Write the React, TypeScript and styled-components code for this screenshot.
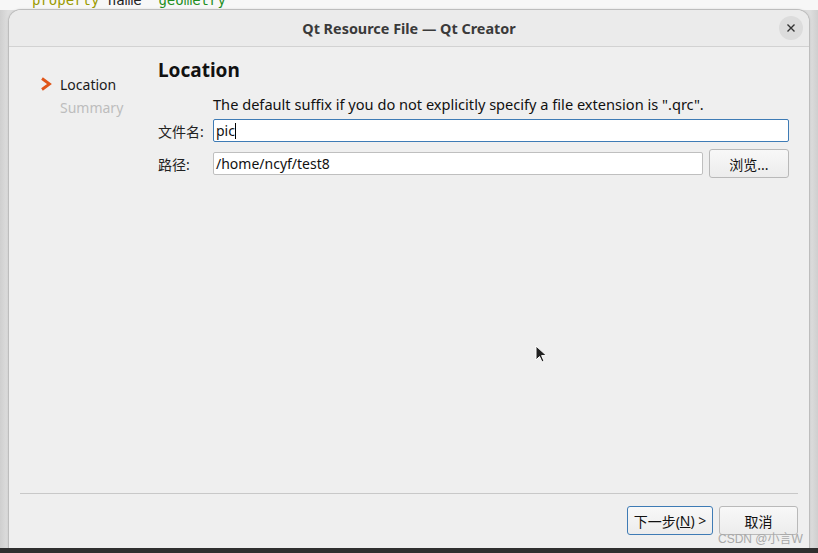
import { createGlobalStyle, styled } from 'styled-components';

const Global = createGlobalStyle`
  html, body {
    margin: 0;
    padding: 0;
    width: 818px;
    height: 553px;
    overflow: hidden;
    background: #d6d6d6;
    font-family: "Noto Sans", "Noto Sans CJK SC", sans-serif;
  }
`;

const S = {
  screen: styled.div`
    position: relative;
    width: 818px;
    height: 553px;
    display: grid;
    grid-template-rows: 10px 538px 5px;
    grid-template-columns: 9px 800px 9px;
    background: linear-gradient(90deg, #cfcfcf 0, #dedede 8px, #dedede 810px, #cfcfcf 818px);
  `,
  codeStrip: styled.div`
    grid-column: 1 / 4;
    grid-row: 1;
    background: #f7f7f7;
    overflow: hidden;
    font-family: "DejaVu Sans Mono", monospace;
    font-size: 14px;
    line-height: 14px;
    margin-top: -7px;
    padding-left: 32px;
    white-space: pre;
    color: #9a9a00;
    span { color: #222; }
    em { font-style: normal; color: #1f8f1f; }
  `,
  bottomStrip: styled.div`
    grid-column: 1 / 4;
    grid-row: 3;
    background: #2f2f2f;
  `,
  window: styled.div`
    grid-column: 2;
    grid-row: 2;
    display: flex;
    flex-direction: column;
    background: #efefef;
    border-radius: 12px 12px 0 0;
    box-shadow: 0 0 0 1px #bdbdbd, 0 0 3px rgba(0,0,0,0.25);
    overflow: hidden;
  `,
  titleBar: styled.div`
    position: relative;
    height: 36px;
    flex: none;
    display: flex;
    align-items: center;
    justify-content: center;
    background: #ebebeb;
    border-bottom: 1px solid #d2d2d2;
    font-size: 14.4px;
    font-weight: bold;
    color: #3a3a3a;
  `,
  close: styled.div`
    position: absolute;
    right: 6px;
    top: 6px;
    width: 24px;
    height: 24px;
    border-radius: 50%;
    background: #dcdcdc;
    display: flex;
    align-items: center;
    justify-content: center;
  `,
  body: styled.div`
    flex: 1;
    display: flex;
    padding: 10px 20px 0 31px;
  `,
  sidebar: styled.div`
    width: 118px;
    flex: none;
    padding-top: 17px;
    display: flex;
    flex-direction: column;
    gap: 3px;
  `,
  step: styled.div<{ $active?: boolean }>`
    display: flex;
    align-items: center;
    gap: 8px;
    height: 20px;
    font-size: 14px;
    color: ${({ $active }) => ($active ? '#1a1a1a' : '#bdbdbd')};
    padding-left: ${({ $active }) => ($active ? '0' : '20px')};
  `,
  main: styled.div`
    flex: 1;
    display: flex;
    flex-direction: column;
  `,
  heading: styled.h1`
    margin: 0;
    font-size: 19px;
    font-weight: bold;
    color: #111;
    line-height: 26px;
  `,
  hint: styled.div`
    margin: 13px 0 0 55px;
    font-size: 14.6px;
    color: #111;
    line-height: 16px;
  `,
  row: styled.div<{ $top: number }>`
    display: flex;
    align-items: center;
    gap: 6px;
    margin-top: ${({ $top }) => $top}px;
  `,
  label: styled.div`
    width: 49px;
    flex: none;
    font-size: 14px;
    color: #222;
  `,
  input: styled.div<{ $focus?: boolean }>`
    flex: 1;
    height: 23px;
    box-sizing: border-box;
    background: #fff;
    border: 1px solid ${({ $focus }) => ($focus ? '#3e7bb5' : '#bfbfbf')};
    border-radius: 2px;
    display: flex;
    align-items: center;
    padding-left: 2px;
    font-size: 14px;
    color: #111;
  `,
  caret: styled.span`
    display: inline-block;
    width: 1px;
    height: 16px;
    background: #000;
  `,
  button: styled.div<{ $focus?: boolean; $w: number }>`
    width: ${({ $w }) => $w}px;
    height: 29px;
    box-sizing: border-box;
    flex: none;
    display: flex;
    align-items: center;
    justify-content: center;
    border: 1px solid ${({ $focus }) => ($focus ? '#3e7bb5' : '#b9b9b9')};
    border-radius: 3px;
    background: linear-gradient(#f8f8f8, #ececec);
    font-size: 14px;
    color: #111;
    u { text-decoration: underline; }
  `,
  footer: styled.div`
    flex: none;
    margin: 0 11px;
    border-top: 1px solid #c8c8c8;
    padding: 12px 0 13px;
    display: flex;
    justify-content: flex-end;
    gap: 6px;
  `,
  watermark: styled.div`
    position: absolute;
    left: 718px;
    top: 529px;
    font-family: "Liberation Sans", "Noto Sans CJK SC", sans-serif;
    font-size: 12px;
    color: #a8a8a8;
  `,
  cursor: styled.svg`
    position: absolute;
    left: 535px;
    top: 345px;
  `,
};

export default function App() {
  return (
    <>
      <Global />
      <S.screen>
        <S.codeStrip>
          {'property '}<span>name</span>{' '}<em>"geometry"</em>
        </S.codeStrip>
        <S.window>
          <S.titleBar>
            Qt Resource File — Qt Creator
            <S.close>
              <svg width="10" height="10" viewBox="0 0 10 10">
                <path d="M1.5 1.5 L8.5 8.5 M8.5 1.5 L1.5 8.5" stroke="#333" strokeWidth="1.4" />
              </svg>
            </S.close>
          </S.titleBar>
          <S.body>
            <S.sidebar>
              <S.step $active>
                <svg width="12" height="14" viewBox="0 0 12 14">
                  <path d="M2 1.5 L9.5 7 L2 12.5" fill="none" stroke="#e0561a" strokeWidth="2.8" />
                </svg>
                Location
              </S.step>
              <S.step>Summary</S.step>
            </S.sidebar>
            <S.main>
              <S.heading>Location</S.heading>
              <S.hint>The default suffix if you do not explicitly specify a file extension is ".qrc".</S.hint>
              <S.row $top={7}>
                <S.label>文件名:</S.label>
                <S.input $focus>
                  pic<S.caret />
                </S.input>
              </S.row>
              <S.row $top={7}>
                <S.label>路径:</S.label>
                <S.input>/home/ncyf/test8</S.input>
                <S.button $w={80}>浏览...</S.button>
              </S.row>
            </S.main>
          </S.body>
          <S.footer>
            <S.button $w={86} $focus>
              下一步(<u>N</u>) &gt;
            </S.button>
            <S.button $w={79}>取消</S.button>
          </S.footer>
        </S.window>
        <S.bottomStrip />
        <S.watermark>CSDN @小言W</S.watermark>
        <S.cursor width="14" height="20" viewBox="0 0 14 20">
          <path d="M1 1 L1 15 L4.5 11.5 L7 17 L9 16 L6.6 10.6 L11.5 10.6 Z" fill="#222" stroke="#fff" strokeWidth="1" />
        </S.cursor>
      </S.screen>
    </>
  );
}
